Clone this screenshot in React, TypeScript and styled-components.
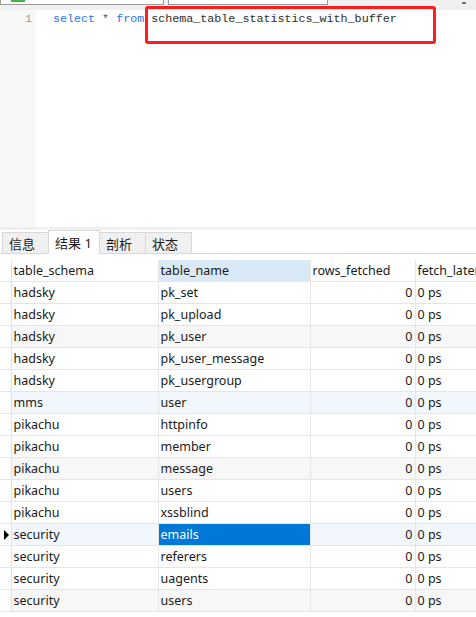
import React from "react";
import styled, { createGlobalStyle } from "styled-components";

const GlobalStyle = createGlobalStyle`
  html, body {
    margin: 0;
    padding: 0;
    background: #fff;
  }
`;

const Page = styled.div`
  width: 476px;
  height: 617px;
  overflow: hidden;
  display: flex;
  flex-direction: column;
  font-family: "Noto Sans", "Noto Sans CJK SC", sans-serif;
  font-size: 13px;
  color: #1a1a1a;
  background: #fff;
`;

const TopStrip = styled.div`
  height: 10px;
  flex: none;
  background: #f0f0f0;
  display: flex;
  gap: 4px;
  align-items: flex-start;
  position: relative;
`;

const ToolBox = styled.div<{ $w: number }>`
  width: ${(p) => p.$w}px;
  height: 5px;
  background: #fff;
  border: 1px solid #9a9a9a;
  border-top: none;
  box-sizing: border-box;
  position: relative;
`;

const GreenMark = styled.div`
  position: absolute;
  left: 10px;
  top: 0;
  width: 14px;
  height: 2px;
  background: #3fb54a;
`;

const MinDash = styled.div`
  margin-left: auto;
  margin-right: 10px;
  margin-top: 2px;
  width: 4px;
  height: 2px;
  background: #777;
`;

const Editor = styled.div`
  height: 217px;
  flex: none;
  display: flex;
  position: relative;
`;

const Gutter = styled.div`
  width: 36px;
  background: #f7f7f7;
  box-sizing: border-box;
  padding: 1px 4px 0 0;
  text-align: right;
  font-family: "Liberation Mono", monospace;
  font-size: 11.7px;
  line-height: 16px;
  color: #9a9a9a;
`;

const Code = styled.div`
  flex: 1;
  padding: 1px 0 0 17px;
  font-family: "Liberation Mono", monospace;
  font-size: 11.7px;
  line-height: 16px;
  color: #2b2b2b;
  white-space: pre;
`;

const Keyword = styled.span`
  color: #2a78e0;
`;

const Star = styled.span`
  color: #555;
`;

const Highlight = styled.div`
  position: absolute;
  left: 145px;
  top: -4px;
  width: 291px;
  height: 38px;
  border: 3px solid #ff1d1d;
  border-radius: 3px;
  box-sizing: border-box;
`;

const Divider = styled.div`
  height: 3px;
  flex: none;
  background: #f0f0f0;
`;

const TabBar = styled.div`
  height: 23px;
  flex: none;
  display: flex;
  align-items: flex-end;
  padding-left: 3px;
  border-bottom: 1px solid #d9d9d9;
`;

const Tab = styled.div<{ $active?: boolean; $w: number }>`
  width: ${(p) => p.$w}px;
  height: ${(p) => (p.$active ? 24 : 22)}px;
  box-sizing: border-box;
  margin-bottom: -1px;
  margin-left: -1px;
  padding-left: 6px;
  display: flex;
  align-items: center;
  background: ${(p) => (p.$active ? "#fff" : "#f0f0f0")};
  border: 1px solid #d9d9d9;
  border-bottom-color: ${(p) => (p.$active ? "#fff" : "#d9d9d9")};
  font-size: 13px;
  color: #1a1a1a;
`;

const TableWrap = styled.div`
  padding-top: 6px;
  flex: 1;
  overflow: hidden;
`;

const Grid = styled.table`
  border-collapse: collapse;
  table-layout: fixed;
  width: 520px;
  font-size: 12.5px;
`;

const HeadCell = styled.th<{ $selected?: boolean }>`
  height: 21px;
  padding: 0 0 0 2px;
  text-align: left;
  font-weight: normal;
  white-space: nowrap;
  overflow: hidden;
  background: ${(p) => (p.$selected ? "#d9e9f7" : "transparent")};
  border-right: 1px solid #e6e6e6;
  border-bottom: 1px solid #e6e6e6;
`;

const Row = styled.tr<{ $tone?: "gray" | "blue" }>`
  background: ${(p) =>
    p.$tone === "gray" ? "#f7f7f7" : p.$tone === "blue" ? "#f2f7fd" : "#fff"};
`;

const Cell = styled.td<{ $num?: boolean; $selected?: boolean }>`
  height: 21px;
  padding: ${(p) => (p.$num ? "0 2px 0 0" : "0 0 0 2px")};
  text-align: ${(p) => (p.$num ? "right" : "left")};
  white-space: nowrap;
  overflow: hidden;
  border-right: 1px solid #e6e6e6;
  border-bottom: 1px solid #e6e6e6;
  background: ${(p) => (p.$selected ? "#0078d7" : "transparent")};
  color: ${(p) => (p.$selected ? "#fff" : "inherit")};
`;

const Marker = styled.td`
  padding: 0;
  border-right: 1px solid #e0e0e0;
  border-bottom: 1px solid #e6e6e6;
  background: #fff;
`;

const Arrow = styled.div`
  width: 0;
  height: 0;
  margin-left: 4px;
  border-top: 5px solid transparent;
  border-bottom: 5px solid transparent;
  border-left: 5px solid #000;
`;

type Rec = {
  schema: string;
  name: string;
  tone?: "gray" | "blue";
  current?: boolean;
};

const rows: Rec[] = [
  { schema: "hadsky", name: "pk_set" },
  { schema: "hadsky", name: "pk_upload" },
  { schema: "hadsky", name: "pk_user", tone: "gray" },
  { schema: "hadsky", name: "pk_user_message" },
  { schema: "hadsky", name: "pk_usergroup" },
  { schema: "mms", name: "user", tone: "blue" },
  { schema: "pikachu", name: "httpinfo" },
  { schema: "pikachu", name: "member" },
  { schema: "pikachu", name: "message", tone: "gray" },
  { schema: "pikachu", name: "users" },
  { schema: "pikachu", name: "xssblind" },
  { schema: "security", name: "emails", tone: "blue", current: true },
  { schema: "security", name: "referers" },
  { schema: "security", name: "uagents" },
  { schema: "security", name: "users", tone: "gray" },
];

export default function App() {
  return (
    <>
      <GlobalStyle />
      <Page>
        <TopStrip>
          <ToolBox $w={164}>
            <GreenMark />
          </ToolBox>
          <ToolBox $w={160} />
          <MinDash />
        </TopStrip>

        <Editor>
          <Gutter>1</Gutter>
          <Code>
            <Keyword>select</Keyword> <Star>*</Star> <Keyword>from</Keyword>{" "}
            schema_table_statistics_with_buffer
          </Code>
          <Highlight />
        </Editor>

        <Divider />

        <TabBar>
          <Tab $w={47}>信息</Tab>
          <Tab $w={52} $active>
            结果 1
          </Tab>
          <Tab $w={47}>剖析</Tab>
          <Tab $w={47}>状态</Tab>
        </TabBar>

        <TableWrap>
          <Grid>
            <colgroup>
              <col style={{ width: 11 }} />
              <col style={{ width: 147 }} />
              <col style={{ width: 152 }} />
              <col style={{ width: 105 }} />
              <col style={{ width: 105 }} />
            </colgroup>
            <thead>
              <tr>
                <Marker />
                <HeadCell>table_schema</HeadCell>
                <HeadCell $selected>table_name</HeadCell>
                <HeadCell>rows_fetched</HeadCell>
                <HeadCell>fetch_latency</HeadCell>
              </tr>
            </thead>
            <tbody>
              {rows.map((r, i) => (
                <Row key={i} $tone={r.tone}>
                  <Marker>{r.current && <Arrow />}</Marker>
                  <Cell>{r.schema}</Cell>
                  <Cell $selected={r.current}>{r.name}</Cell>
                  <Cell $num>0</Cell>
                  <Cell>0 ps</Cell>
                </Row>
              ))}
            </tbody>
          </Grid>
        </TableWrap>
      </Page>
    </>
  );
}
